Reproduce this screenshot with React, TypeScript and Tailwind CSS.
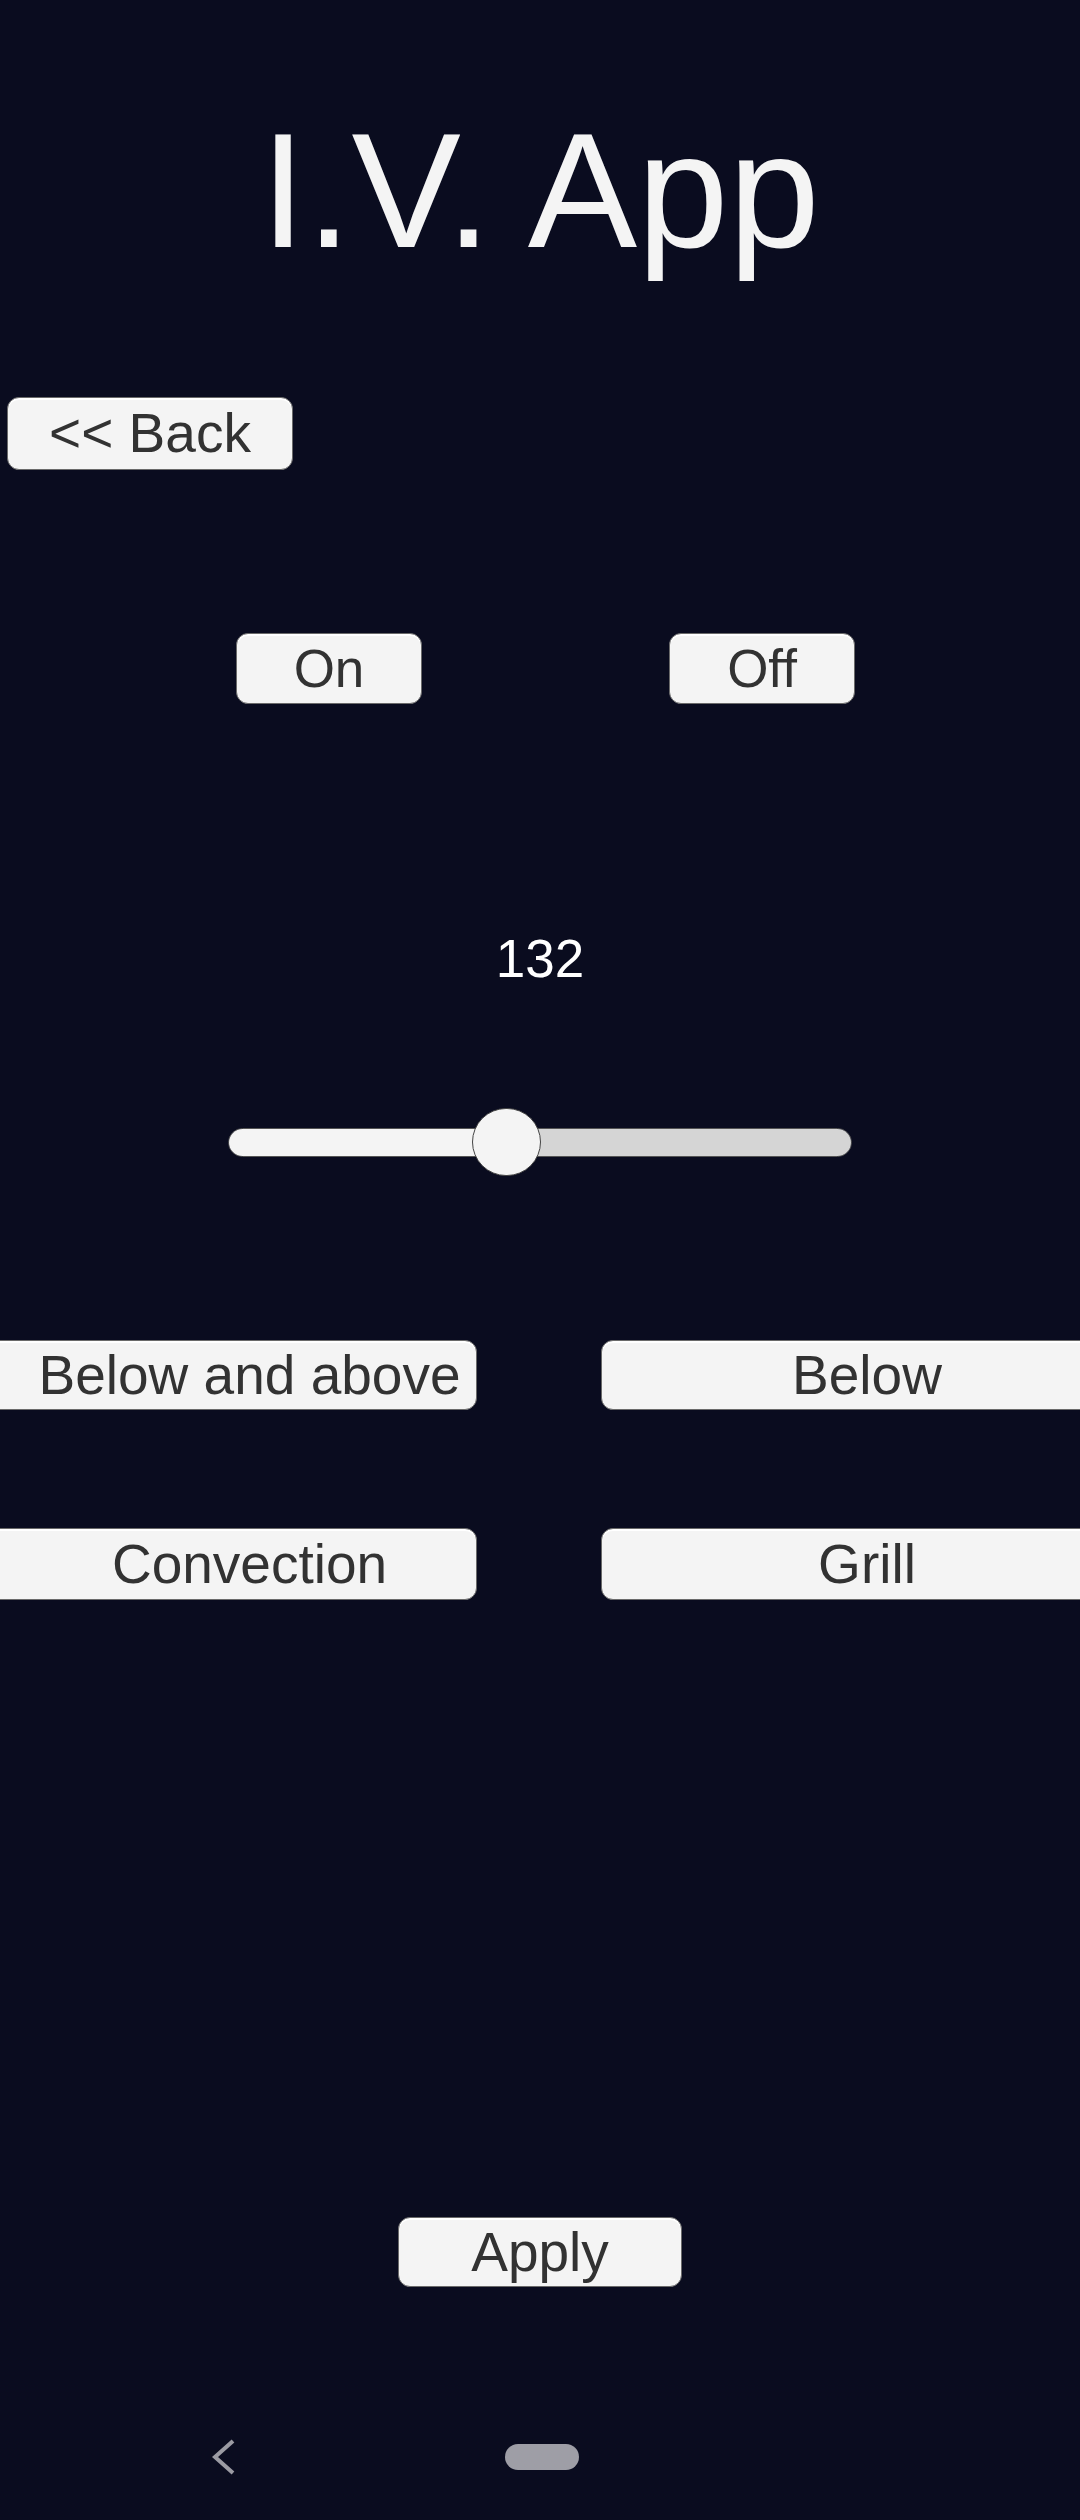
import React from "react";

const font = "font-['Liberation_Sans',Arial,sans-serif]";

const btn =
  "flex items-center justify-center bg-[#f4f4f4] border border-[#6a6a6a] rounded-[12px] shadow-[inset_0_2px_0_#ffffff] text-[#323232] leading-none";

const Button = ({ className, children }: { className: string; children: React.ReactNode }) => (
  <button className={`${btn} ${className}`}>{children}</button>
);

export default function App() {
  return (
    <div className={`w-[1080px] h-[2520px] overflow-hidden bg-[#0a0c1f] flex flex-col ${font}`}>
      {/* title */}
      <h1 className="mt-[109px] text-center text-[164px] leading-none text-[#f4f4f4]">I.V. App</h1>

      <div className="mt-[124px] pl-[7px]">
        <Button className="w-[286px] h-[73px] text-[55px]">&lt;&lt; Back</Button>
      </div>

      {/* power */}
      <div className="mt-[163px] flex pl-[236px] gap-[247px]">
        <Button className="w-[186px] h-[71px] text-[53px]">On</Button>
        <Button className="w-[186px] h-[71px] text-[53px]">Off</Button>
      </div>

      <p className="mt-[228px] text-center text-[53px] leading-none text-white">132</p>

      {/* temperature slider */}
      <div className="mt-[123px] mx-auto w-[624px] h-[68px] relative flex items-center">
        <div className="w-full h-[29px] flex rounded-full border border-[#555] overflow-hidden">
          <div className="w-[278px] bg-[#f4f4f4]" />
          <div className="flex-1 bg-[#d5d5d5]" />
        </div>
        <div className="absolute left-[244px] top-0 w-[69px] h-[68px] rounded-full bg-[#f4f4f4] border border-[#444]" />
      </div>

      {/* modes */}
      <div className="mt-[164px] flex ml-[-55px] gap-[124px]">
        <Button className="w-[532px] shrink-0 h-[70px] text-[55px] pl-[77px]">Below and above</Button>
        <Button className="w-[532px] shrink-0 h-[70px] text-[55px]">Below</Button>
      </div>
      <div className="mt-[118px] flex ml-[-55px] gap-[124px]">
        <Button className="w-[532px] shrink-0 h-[72px] text-[55px] pl-[77px]">Convection</Button>
        <Button className="w-[532px] shrink-0 h-[72px] text-[55px]">Grill</Button>
      </div>

      <div className="mt-[617px] flex justify-center">
        <Button className="w-[284px] h-[70px] text-[55px]">Apply</Button>
      </div>

      {/* android nav */}
      <div className="mt-[154px] h-[32px] flex items-center pl-[212px] gap-[269px]">
        <svg width="24" height="36" viewBox="0 0 24 36">
          <polyline points="21,2 3,18 21,34" fill="none" stroke="#9b9ba3" strokeWidth="4" />
        </svg>
        <div className="w-[74px] h-[26px] rounded-full bg-[#9e9ea6]" />
      </div>
    </div>
  );
}
